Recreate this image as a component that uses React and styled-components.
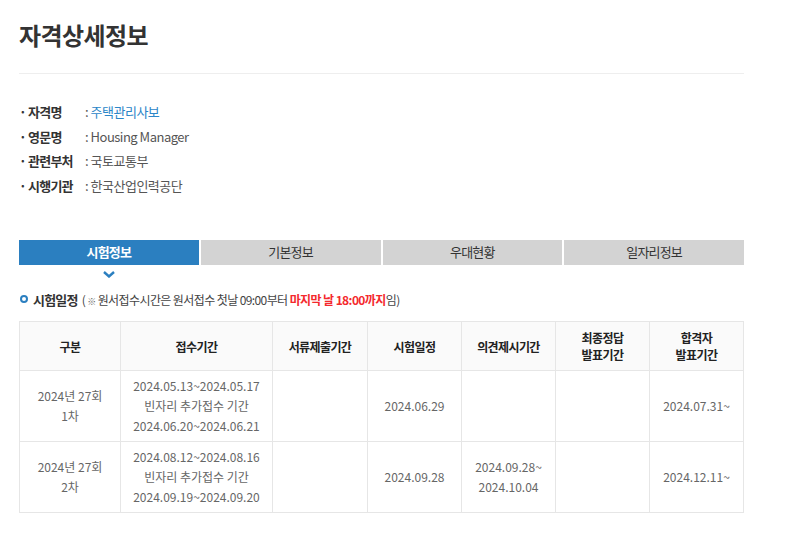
import React from 'react'
import styled, { createGlobalStyle } from 'styled-components'

const GlobalStyle = createGlobalStyle`
  body {
    margin: 0;
    background: #fff;
    font-family: "Noto Sans CJK KR", "Noto Sans", sans-serif;
    color: #333;
  }
`

const infoRows = [
  { label: '자격명', value: '주택관리사보', link: true },
  { label: '영문명', value: 'Housing Manager' },
  { label: '관련부처', value: '국토교통부' },
  { label: '시행기관', value: '한국산업인력공단' },
]

const tabs = ['시험정보', '기본정보', '우대현황', '일자리정보']

const columns = [
  { title: ['구분'], width: 101 },
  { title: ['접수기간'], width: 152 },
  { title: ['서류제출기간'], width: 95 },
  { title: ['시험일정'], width: 94 },
  { title: ['의견제시기간'], width: 94 },
  { title: ['최종정답', '발표기간'], width: 94 },
  { title: ['합격자', '발표기간'], width: 94 },
]

const rows = [
  [
    ['2024년 27회', '1차'],
    ['2024.05.13~2024.05.17', '빈자리 추가접수 기간', '2024.06.20~2024.06.21'],
    [],
    ['2024.06.29'],
    [],
    [],
    ['2024.07.31~'],
  ],
  [
    ['2024년 27회', '2차'],
    ['2024.08.12~2024.08.16', '빈자리 추가접수 기간', '2024.09.19~2024.09.20'],
    [],
    ['2024.09.28'],
    ['2024.09.28~', '2024.10.04'],
    [],
    ['2024.12.11~'],
  ],
]

const App = () => {
  return (
    <Page>
      <GlobalStyle />
      <Title>자격상세정보</Title>
      <Divider />
      <InfoList>
        {infoRows.map((row) => (
          <InfoRow key={row.label}>
            <InfoLabel>· {row.label}</InfoLabel>
            <InfoValue $link={row.link}>
              <Colon>:</Colon> {row.value}
            </InfoValue>
          </InfoRow>
        ))}
      </InfoList>

      <Tabs>
        {tabs.map((tab, i) => (
          <Tab key={tab} $active={i === 0}>
            {tab}
            {i === 0 && (
              <Chevron width="12" height="7" viewBox="0 0 12 7">
                <path d="M1 1 L6 5.5 L11 1" fill="none" stroke="#2b7fc0" strokeWidth="2.4" />
              </Chevron>
            )}
          </Tab>
        ))}
      </Tabs>

      <SectionHead>
        <Bullet />
        <SectionTitle>시험일정</SectionTitle>
        <Note>
          ( <Mark>※</Mark> 원서접수시간은 원서접수 첫날 09:00부터 <Red>마지막 날 18:00까지</Red>임)
        </Note>
      </SectionHead>

      <Table>
        <colgroup>
          {columns.map((c, i) => (
            <col key={i} style={{ width: c.width }} />
          ))}
        </colgroup>
        <thead>
          <tr>
            {columns.map((c, i) => (
              <Th key={i}>
                {c.title.map((t) => (
                  <div key={t}>{t}</div>
                ))}
              </Th>
            ))}
          </tr>
        </thead>
        <tbody>
          {rows.map((row, r) => (
            <tr key={r}>
              {row.map((cell, i) => (
                <Td key={i}>
                  {cell.map((line) => (
                    <div key={line}>{line}</div>
                  ))}
                </Td>
              ))}
            </tr>
          ))}
        </tbody>
      </Table>
    </Page>
  )
}

const Page = styled.div`
  width: 725px;
  padding: 18px 0 0 19px;
`

const Title = styled.h1`
  margin: 0;
  font-size: 24px;
  line-height: 34px;
  font-weight: 700;
  color: #333;
  letter-spacing: -0.6px;
`

const Divider = styled.hr`
  margin: 21px 0 0;
  border: none;
  border-top: 1px solid #eeeeee;
`

const InfoList = styled.ul`
  list-style: none;
  margin: 26px 0 0;
  padding: 0;
`

const InfoRow = styled.li`
  display: flex;
  height: 24.6px;
  line-height: 24px;
  font-size: 13px;
  letter-spacing: -0.5px;
`

const InfoLabel = styled.span`
  width: 66px;
  font-weight: 700;
  color: #333;
  letter-spacing: -0.8px;
`

const InfoValue = styled.span`
  color: ${(p) => (p.$link ? '#2b86c8' : '#555')};
`

const Colon = styled.span`
  color: #555;
`

const Tabs = styled.div`
  display: flex;
  gap: 2px;
  margin-top: 42px;
`

const Tab = styled.div`
  position: relative;
  flex: 1;
  height: 25px;
  line-height: 24px;
  text-align: center;
  font-size: 13px;
  letter-spacing: -0.8px;
  font-weight: ${(p) => (p.$active ? 700 : 400)};
  color: ${(p) => (p.$active ? '#fff' : '#333')};
  background: ${(p) => (p.$active ? '#2b7fc0' : '#d3d3d3')};
`

const Chevron = styled.svg`
  position: absolute;
  left: 50%;
  top: 31px;
  margin-left: -6px;
`

const SectionHead = styled.div`
  display: flex;
  align-items: center;
  margin-top: 24px;
  height: 20px;
`

const Bullet = styled.span`
  width: 4px;
  height: 4px;
  border: 2px solid #2b7fc0;
  border-radius: 50%;
  margin: 0 5px 0 1px;
`

const SectionTitle = styled.span`
  font-size: 13px;
  font-weight: 700;
  color: #333;
  letter-spacing: -0.8px;
  margin-right: 4px;
`

const Note = styled.span`
  font-size: 12px;
  color: #444;
  letter-spacing: -0.6px;
`

const Mark = styled.span`
  font-size: 9px;
  color: #666;
`

const Red = styled.b`
  color: #f4292d;
`

const Table = styled.table`
  width: 725px;
  margin-top: 12px;
  border-collapse: collapse;
  table-layout: fixed;
`

const Th = styled.th`
  height: 48px;
  background: #fafafa;
  border: 1px solid #e6e6e6;
  font-size: 12px;
  font-weight: 700;
  color: #222;
  line-height: 17px;
  letter-spacing: -0.6px;
  padding: 0;
  vertical-align: middle;
`

const Td = styled.td`
  height: 70px;
  border: 1px solid #e6e6e6;
  font-size: 12px;
  color: #666;
  line-height: 20px;
  text-align: center;
  padding: 0;
  vertical-align: middle;
`

export default App
